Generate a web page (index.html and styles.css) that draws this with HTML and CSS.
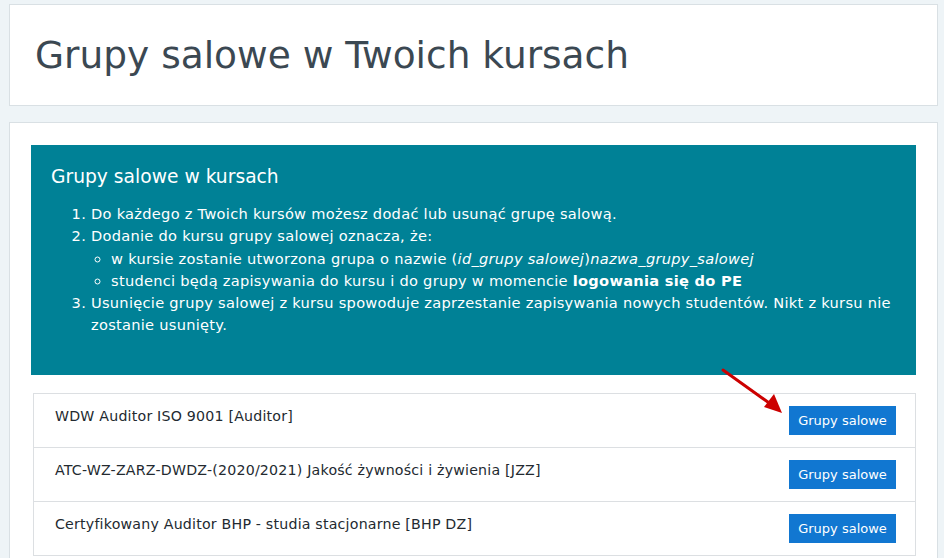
FILE: index.html
```html
<!DOCTYPE html>
<html lang="pl">
<head>
<meta charset="utf-8">
<title>Grupy salowe w Twoich kursach</title>
<link rel="stylesheet" href="styles.css">
</head>
<body>
<div class="page">
  <header class="card page-header">
    <h1 class="page-title">Grupy salowe w Twoich kursach</h1>
  </header>
  <main class="card main-card">
    <section class="alert-info">
      <h4 class="alert-title">Grupy salowe w kursach</h4>
      <ol class="steps">
        <li>Do każdego z Twoich kursów możesz dodać lub usunąć grupę salową.</li>
        <li>Dodanie do kursu grupy salowej oznacza, że:
          <ul class="sub">
            <li>w kursie zostanie utworzona grupa o nazwie (<i>id_grupy salowej</i>)<i>nazwa_grupy_salowej</i></li>
            <li>studenci będą zapisywania do kursu i do grupy w momencie <b>logowania się do PE</b></li>
          </ul>
        </li>
        <li>Usunięcie grupy salowej z kursu spowoduje zaprzestanie zapisywania nowych studentów. Nikt z kursu nie zostanie usunięty.</li>
      </ol>
    </section>
    <div class="course-list">
      <div class="course-row">
        <span class="course-name">WDW Auditor ISO 9001 [Auditor]</span>
        <button class="btn">Grupy salowe</button>
        <svg class="arrow" width="70" height="52" viewBox="0 0 70 52">
          <line x1="3" y1="2" x2="52" y2="37" stroke="#cc0000" stroke-width="3" stroke-linecap="round"/>
          <polygon points="62,45 44,39 54,26" fill="#cc0000"/>
        </svg>
      </div>
      <div class="course-row">
        <span class="course-name">ATC-WZ-ZARZ-DWDZ-(2020/2021) Jakość żywności i żywienia [JZZ]</span>
        <button class="btn">Grupy salowe</button>
      </div>
      <div class="course-row">
        <span class="course-name">Certyfikowany Auditor BHP - studia stacjonarne [BHP DZ]</span>
        <button class="btn">Grupy salowe</button>
      </div>
    </div>
  </main>
</div>
</body>
</html>
```

FILE: styles.css
```css
html, body {
  margin: 0;
  padding: 0;
  background: #eef4f7;
  font-family: "DejaVu Sans", "Open Sans", sans-serif;
  color: #1d2125;
}
.page {
  padding: 4px 6px 0 9px;
  height: 554px;
  overflow: hidden;
}
.card {
  background: #fff;
  border: 1px solid #d9e0e4;
}
.page-header {
  height: 100px;
  display: flex;
  align-items: center;
  padding: 0 25px;
}
.page-title {
  margin: 0;
  font-weight: 400;
  font-size: 37.5px;
  line-height: 1.2;
  color: #3b4852;
}
.main-card {
  margin-top: 16px;
  padding: 22px 21px 0 21px;
  height: 500px;
}
.alert-info {
  background: #008196;
  color: #fff;
  padding: 20px 20px 1px 20px;
  height: 209px;
}
.alert-title {
  margin: 0 0 14px 0;
  font-weight: 400;
  font-size: 18.7px;
  line-height: 24px;
}
.steps {
  margin: 0;
  padding-left: 40px;
  font-size: 14.6px;
  letter-spacing: 0.28px;
  line-height: 22.3px;
}
.sub {
  margin: 0;
  padding-left: 20px;
  list-style: circle;
}
.course-list {
  margin: 18px 0 0 2px;
  border: 1px solid #dcdfe2;
}
.course-row {
  position: relative;
  display: flex;
  align-items: center;
  justify-content: space-between;
  padding: 12px 19px 12px 21px;
  border-top: 1px solid #dcdfe2;
}
.course-row:first-child {
  border-top: none;
}
.course-name {
  font-size: 14.2px;
  letter-spacing: 0.2px;
  color: #232a30;
  padding-bottom: 9px;
}
.btn {
  height: 29px;
  width: 107px;
  padding: 0;
  border: none;
  background: #1177d1;
  color: #fff;
  font-family: inherit;
  font-size: 13px;
}
.arrow {
  position: absolute;
  left: 686px;
  top: -26px;
}
```
